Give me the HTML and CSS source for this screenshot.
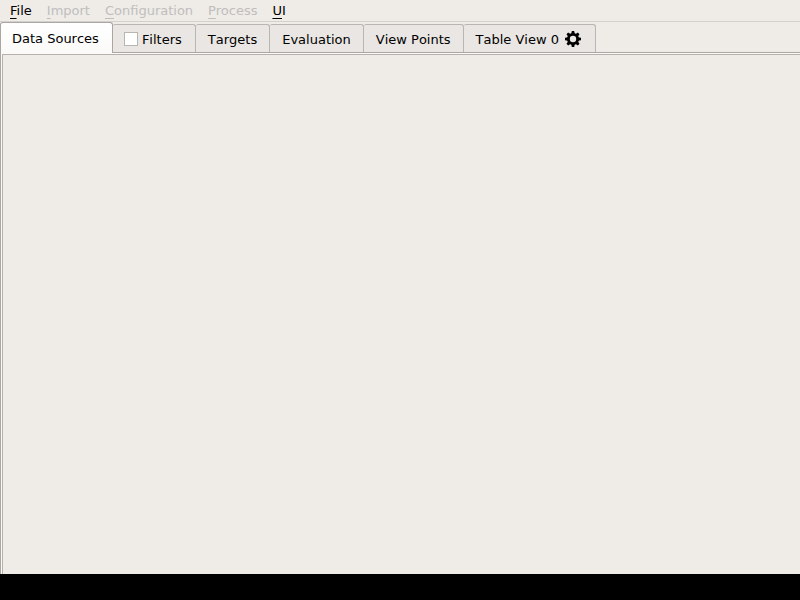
FILE: index.html
```html
<!DOCTYPE html>
<html lang="en">
<head>
<meta charset="utf-8">
<title>Data Sources</title>
<link rel="stylesheet" href="styles.css">
</head>
<body>
<div class="window">
  <nav class="menubar">
    <button class="menu" type="button"><u>F</u>ile</button>
    <button class="menu" type="button" disabled><u>I</u>mport</button>
    <button class="menu" type="button" disabled><u>C</u>onfiguration</button>
    <button class="menu" type="button" disabled><u>P</u>rocess</button>
    <button class="menu" type="button"><u>U</u>I</button>
  </nav>
  <div class="tabs">
    <div class="tab active"><button class="label" type="button">Data Sources</button></div>
    <div class="tab"><input class="check" type="checkbox" aria-labelledby="filters"><button class="label" id="filters" type="button">Filters</button></div>
    <div class="tab"><button class="label" type="button">Targets</button></div>
    <div class="tab"><button class="label" type="button">Evaluation</button></div>
    <div class="tab"><button class="label" type="button">View Points</button></div>
    <div class="tab">
      <button class="label" type="button">Table View 0</button>
      <button class="gear" type="button" aria-label="Configure view">
        <svg viewBox="0 0 16 16" width="16" height="16">
          <g fill="currentColor">
            <path d="M6.8 0h2.4l.6 3v10l-.6 3H6.8l-.6-3V3z"/>
            <path d="M6.8 0h2.4l.6 3v10l-.6 3H6.8l-.6-3V3z" transform="rotate(45 8 8)"/>
            <path d="M6.8 0h2.4l.6 3v10l-.6 3H6.8l-.6-3V3z" transform="rotate(90 8 8)"/>
            <path d="M6.8 0h2.4l.6 3v10l-.6 3H6.8l-.6-3V3z" transform="rotate(135 8 8)"/>
            <circle cx="8" cy="8" r="6"/>
          </g>
          <circle class="hub" cx="8" cy="8" r="3.2"/>
        </svg>
      </button>
    </div>
  </div>
  <main class="pane"></main>
</div>
</body>
</html>
```
FILE: styles.css
```css
* {
  box-sizing: border-box;
}

body {
  margin: 0;
  background: #000;
  color: #000;
  font: 13px/16px "DejaVu Sans", sans-serif;
}

button {
  margin: 0;
  padding: 0;
  border: 0;
  background: none;
  color: inherit;
  font: inherit;
}

.window {
  display: flex;
  flex-direction: column;
  height: 100vh;
  padding-bottom: 26px;
}

.menubar {
  display: flex;
  gap: 15px;
  height: 22px;
  padding: 3px 10px 2px;
  border-bottom: 1px solid #d4d1cd;
  background: #efebe7;
}

.menu:disabled {
  color: #bebebe;
}

.menu u {
  text-underline-offset: 3px;
  text-decoration-thickness: 1px;
  text-decoration-skip-ink: none;
}

.tabs {
  display: flex;
  align-items: flex-end;
  background: #efebe7;
  border-bottom: 1px solid #aaa7a3;
}

.label {
  font-kerning: none;
}

.tab {
  display: flex;
  align-items: center;
  height: 28px;
  padding: 2px 12px 0;
  border: 1px solid #b9b5b1;
  border-width: 1px 1px 0 0;
  border-radius: 2px 3px 0 0;
  background: #e9e6e3;
}

.tab.active,
.tab:has(.check) {
  padding: 2px 13px 0 11px;
}

.tab.active {
  height: 31px;
  margin-bottom: -1px;
  border-color: #aaa7a3;
  border-left-width: 1px;
  border-radius: 3px 3px 0 0;
  background: linear-gradient(#fff, #fbfaf9);
}

.check {
  appearance: none;
  width: 14px;
  height: 14px;
  margin: 0 4px 2px 0;
  border: 1px solid #b9b5b1;
  background: #fff;
}

.gear {
  height: 16px;
  margin: 0 2px 2px 6px;
}

.gear svg {
  display: block;
}

.hub {
  fill: #e9e6e3;
}

.pane {
  display: flex;
  flex: 1;
  padding: 1px 0 0 1px;
  border-left: 1px solid #aaa7a3;
  background: #fcfbfa;
}

.pane::before {
  content: "";
  flex: 1;
  border: 1px solid #b4b1ad;
  border-width: 1px 0 0 1px;
  background: #efebe7;
}
```
